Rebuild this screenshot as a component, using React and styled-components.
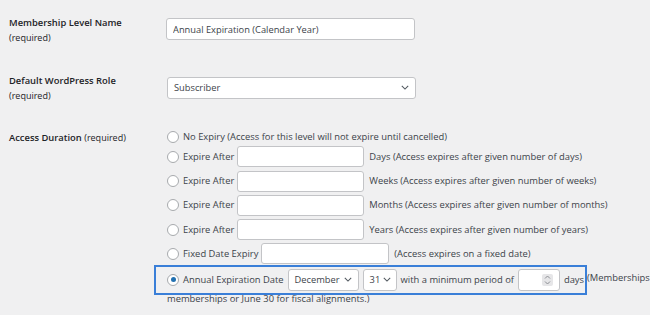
import React from "react";
import styled, { createGlobalStyle } from "styled-components";

const GlobalStyle = createGlobalStyle`
  body {
    margin: 0;
    background: #f0f0f1;
    font-family: "Open Sans", "Noto Sans", sans-serif;
    color: #3c434a;
    overflow: hidden;
  }
`;

const Form = styled.div`
  padding: 18px 0 0 9px;
  width: 1100px;
`;

const Field = styled.div`
  display: grid;
  grid-template-columns: 158px 1fr;
  align-items: start;
  margin-bottom: ${(p) => p.gap || 0}px;
`;

const Label = styled.div`
  font-size: 9.4px;
  font-weight: 600;
  color: #1d2327;
  line-height: 14px;
  margin-top: ${(p) => p.top || 0}px;

  small {
    display: ${(p) => (p.inline ? "inline" : "block")};
    font-size: 9px;
    font-weight: 400;
    margin-top: ${(p) => (p.inline ? 0 : 1)}px;
  }
`;

const TextInput = styled.input`
  box-sizing: border-box;
  width: ${(p) => p.w || 127}px;
  height: ${(p) => p.h || 21}px;
  margin: 0 1px 0 -1px;
  padding: 0 6px;
  border: 1px solid #c3c4c7;
  border-radius: 3px;
  background: #fff;
  font: inherit;
  font-size: 9.3px;
  color: #3c434a;
  outline: none;
`;

const SelectBox = styled.div`
  box-sizing: border-box;
  display: inline-flex;
  align-items: center;
  justify-content: space-between;
  width: ${(p) => p.w}px;
  height: 22px;
  padding: 0 ${(p) => p.pr || 6}px 0 6px;
  border: 1px solid #c3c4c7;
  border-radius: 3px;
  background: #fff;
  font-size: 9.3px;
  color: #3c434a;
`;

const Options = styled.div`
  display: flex;
  flex-direction: column;
  gap: 3.25px;
  font-size: 9.4px;
  line-height: 12px;
`;

const Option = styled.div`
  display: flex;
  align-items: center;
  gap: 4px;
  white-space: nowrap;
`;

const Radio = styled.span`
  box-sizing: border-box;
  width: 12px;
  height: 12px;
  flex: none;
  border-radius: 50%;
  border: 1px solid #a7aaad;
  background: #fff;
  display: inline-flex;
  align-items: center;
  justify-content: center;

  &::after {
    content: "";
    width: 5px;
    height: 5px;
    border-radius: 50%;
    background: ${(p) => (p.checked ? "#2271b1" : "transparent")};
  }
`;

const AnnualRow = styled.div`
  white-space: nowrap;
  line-height: 14px;
  margin-top: -3px;
`;

const Highlight = styled.span`
  display: inline-flex;
  align-items: center;
  gap: 4px;
  vertical-align: middle;
  margin: 0 0 -3px -13px;
  padding: 2px 1px 2px 11px;
  border: 2px solid #3a7fd8;
`;

const Spin = styled.span`
  display: inline-flex;
  align-items: center;
  justify-content: center;
  width: 11px;
  height: 12px;
  background: #e6e6e8;
  border-radius: 2px;
`;

const NumberBox = styled.div`
  box-sizing: border-box;
  display: inline-flex;
  align-items: center;
  justify-content: flex-end;
  width: 42px;
  height: 22px;
  padding-right: 6px;
  border: 1px solid #c3c4c7;
  border-radius: 3px;
  background: #fff;
`;

const Chevron = () => (
  <svg width="8" height="5" viewBox="0 0 10 6" fill="none">
    <path d="M1 1l4 4 4-4" stroke="#50575e" strokeWidth="1.3" />
  </svg>
);

const Select = ({ w, pr, children }) => (
  <SelectBox w={w} pr={pr}>
    <span>{children}</span>
    <Chevron />
  </SelectBox>
);

const ExpireRow = ({ unit, text }) => (
  <Option>
    <Radio />
    <span>Expire After</span>
    <TextInput w={127} />
    <span>
      {unit} (Access expires after given number of {text})
    </span>
  </Option>
);

export default function App() {
  return (
    <>
      <GlobalStyle />
      <Form>
        <Field gap={32}>
          <Label top={-2.5}>
            Membership Level Name
            <small>(required)</small>
          </Label>
          <TextInput w={249} h={22} defaultValue="Annual Expiration (Calendar Year)" />
        </Field>
        <Field gap={28}>
          <Label top={-2.5}>
            Default WordPress Role
            <small>(required)</small>
          </Label>
          <Select w={249}>Subscriber</Select>
        </Field>
        <Field>
          <Label inline>
            Access Duration <small>(required)</small>
          </Label>
          <Options>
            <Option>
              <Radio />
              <span>No Expiry (Access for this level will not expire until cancelled)</span>
            </Option>
            <ExpireRow unit="Days" text="days" />
            <ExpireRow unit="Weeks" text="weeks" />
            <ExpireRow unit="Months" text="months" />
            <ExpireRow unit="Years" text="years" />
            <Option>
              <Radio />
              <span>Fixed Date Expiry</span>
              <TextInput w={128} />
              <span>(Access expires on a fixed date)</span>
            </Option>
            <AnnualRow>
              <Highlight>
                <Radio checked />
                <span>Annual Expiration Date</span>
                <Select w={71}>December</Select>
                <Select w={34} pr={5}>31</Select>
                <span>with a minimum period of</span>
                <NumberBox>
                  <Spin>
                    <svg width="7" height="10" viewBox="0 0 7 10" fill="none">
                      <path d="M1 3.5l2.5-2.5L6 3.5M1 6.5l2.5 2.5L6 6.5" stroke="#8c8f94" strokeWidth="1" />
                    </svg>
                  </Spin>
                </NumberBox>
                <span>days</span>
              </Highlight>
              (Memberships will expire on this date every year. Use December 31 for calendar-year
              <br />
              memberships or June 30 for fiscal alignments.)
            </AnnualRow>
          </Options>
        </Field>
      </Form>
    </>
  );
}
